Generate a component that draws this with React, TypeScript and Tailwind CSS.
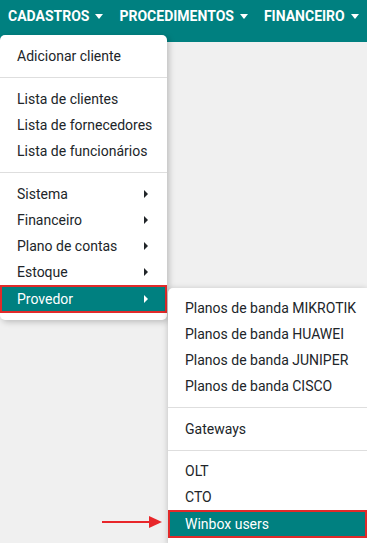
import type { ReactNode } from "react";

const TEAL = "bg-[#008080]";

function DownCaret() {
  return (
    <span className="ml-[6px] inline-block h-0 w-0 border-x-[4px] border-t-[5px] border-x-transparent border-t-white align-middle" />
  );
}

function RightCaret({ light }: { light?: boolean }) {
  return (
    <span
      className={`inline-block h-0 w-0 border-y-[4px] border-l-[4px] border-y-transparent ${
        light ? "border-l-white" : "border-l-[#212529]"
      }`}
    />
  );
}

function Item({
  children,
  active,
  sub,
}: {
  children: ReactNode;
  active?: boolean;
  sub?: boolean;
}) {
  if (active) {
    return (
      <div
        className={`flex h-[28px] items-center justify-between whitespace-nowrap border-2 border-[#e12a2a] ${TEAL} pl-[15px] pr-[17px] text-white`}
      >
        <span>{children}</span>
        {sub && <RightCaret light />}
      </div>
    );
  }
  return (
    <div className="flex h-[26px] items-center justify-between whitespace-nowrap pl-[17px] pr-[19px] text-[#212529]">
      <span>{children}</span>
      {sub && <RightCaret />}
    </div>
  );
}

function Divider({ tight }: { tight?: boolean }) {
  return <div className={`mt-[8px] h-px bg-[#dedede] ${tight ? "mb-[7px]" : "mb-[8px]"}`} />;
}

export default function App() {
  const nav = ["CADASTROS", "PROCEDIMENTOS", "FINANCEIRO"];

  return (
    <div className="relative h-[543px] w-[367px] overflow-hidden bg-[#f0f0f0] font-['Roboto',sans-serif] text-[14px]">
      <nav className={`flex h-[42px] ${TEAL} pt-[8px]`}>
        {nav.map((n) => (
          <div key={n} className="flex h-[16px] items-center whitespace-nowrap px-[8px] text-[14px] font-bold leading-[16px] text-white">
            {n}
            <DownCaret />
          </div>
        ))}
      </nav>

      {/* Cadastros dropdown */}
      <div className="absolute left-0 top-[35px] w-[167px] rounded-[5px] bg-white pb-[7px] pt-[8px] shadow-[2px_2px_6px_rgba(0,0,0,0.22)]">
        <Item>Adicionar cliente</Item>
        <Divider />
        <Item>Lista de clientes</Item>
        <Item>Lista de fornecedores</Item>
        <Item>Lista de funcionários</Item>
        <Divider />
        <Item sub>Sistema</Item>
        <Item sub>Financeiro</Item>
        <Item sub>Plano de contas</Item>
        <Item sub>Estoque</Item>
        <Item sub active>
          Provedor
        </Item>
      </div>

      {/* Provedor submenu */}
      <div className="absolute left-[168px] top-[288px] w-[199px] rounded-tl-[5px] bg-white pt-[7px] pb-[8px] shadow-[0_1px_6px_rgba(0,0,0,0.22)]">
        <Item>Planos de banda MIKROTIK</Item>
        <Item>Planos de banda HUAWEI</Item>
        <Item>Planos de banda JUNIPER</Item>
        <Item>Planos de banda CISCO</Item>
        <Divider />
        <Item>Gateways</Item>
        <Divider tight />
        <Item>OLT</Item>
        <Item>CTO</Item>
        <Item active>Winbox users</Item>
      </div>

      {/* red pointer arrow */}
      <svg className="absolute left-[102px] top-[515px]" width="62" height="14" viewBox="0 0 62 14">
        <line x1="0" y1="7" x2="50" y2="7" stroke="#e8262a" strokeWidth="2" />
        <polygon points="47,1 60,7 47,13" fill="#e8262a" />
      </svg>
    </div>
  );
}
